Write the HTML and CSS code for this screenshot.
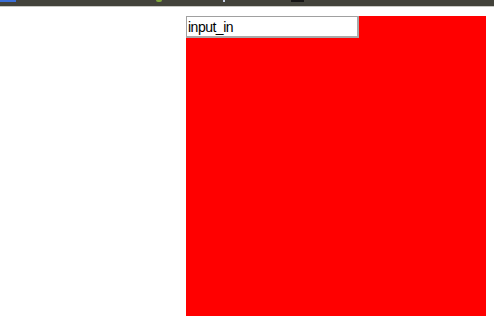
FILE: index.html
```html
<html lang="en">

<head>
    <meta charset="UTF-8">
    <meta name="viewport" content="width=device-width, initial-scale=1.0">
    <title>input_in</title>

    <link rel="stylesheet" href="styles.css">
</head>

<body>

    <div class="toolbar">
        <span class="tab-blue"></span>
        <span class="tab-green"></span>
        <span class="tab-dot"></span>
        <span class="tab-black"></span>
    </div>

    <div class="page">
        <div class="box">
            <input type="text" class="field" value="input_in">
        </div>
    </div>

</body>

</html>
```

FILE: styles.css
```css
body {
    background: rgb(255, 255, 255);
    margin: 0px;
    padding: 0px;
    font-family: "Liberation Sans", Arial, sans-serif;
}
.toolbar {
    height: 6px;
    background-color: #43433b;
    border-bottom: 1px solid #c9c9c4;
    display: flex;
    align-items: flex-start;
}
.toolbar span {
    display: block;
    height: 2px;
}
.tab-blue {
    width: 16px;
    background-color: #3b6fd8;
}
.tab-green {
    width: 6px;
    margin-left: 140px;
    background-color: #7fa53a;
    border-radius: 0 0 3px 3px;
}
.tab-dot {
    width: 2px;
    margin-left: 61px;
    background-color: #c9d3e6;
}
.tab-black {
    width: 13px;
    margin-left: 66px;
    background-color: #161616;
}
.page {
    padding: 9px 0 0 186px;
}
.box {
    width: 300px;
    height: 300px;
    background-color: red;
}
.field {
    display: block;
    box-sizing: border-box;
    width: 173px;
    height: 22px;
    margin: 0;
    padding: 0 1px;
    border: 2px solid #a9a9a9;
    border-width: 1px 2px 2px 1px;
    border-color: #a0a0a0 #a9a9a9 #a9a9a9 #a0a0a0;
    background: #fff;
    color: #000;
    font-family: "Liberation Sans", Arial, sans-serif;
    font-size: 14px;
    letter-spacing: -0.5px;
    outline: none;
}
```
